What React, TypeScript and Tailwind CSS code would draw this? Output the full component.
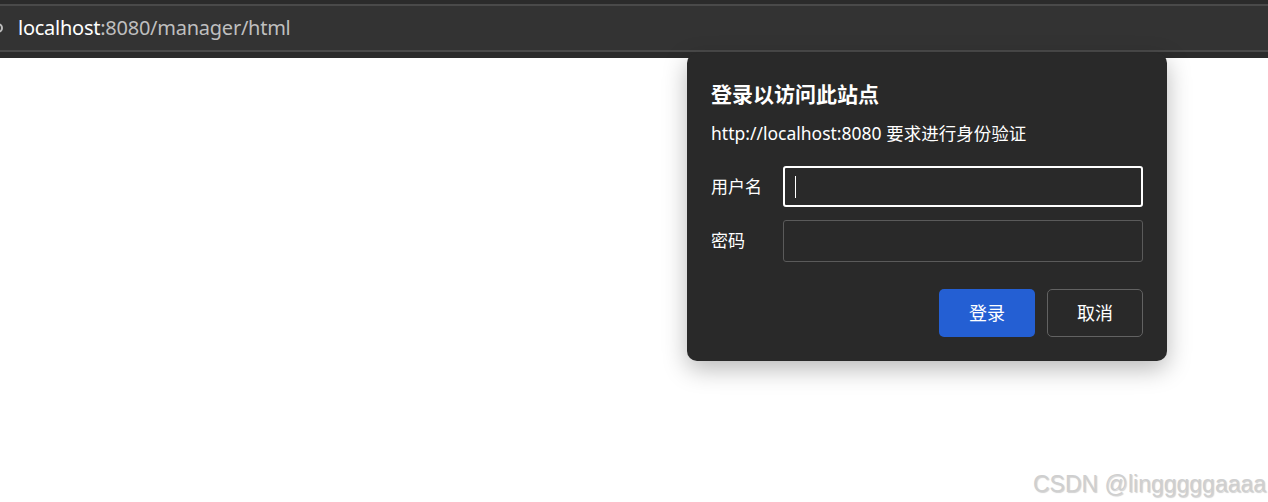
import React from 'react';

const uiFont = { fontFamily: '"Noto Sans", "Noto Sans CJK SC", sans-serif' };

function AddressBar() {
  return (
    <div className="bg-[#2b2b2b] pt-[4px] pb-[6px]">
      <div className="relative flex h-[48px] items-center overflow-hidden border-y-2 border-[#4a4a4a] bg-[#333333] pl-[18px]">
        <span className="absolute left-[-7px] top-[17px] h-[10px] w-[10px] rounded-full border-2 border-[#bdbdbd]" />
        <span className="text-[20px] tracking-[-0.25px] text-[#bfbfbf]" style={uiFont}>
          <span className="text-white">localhost</span>:8080/manager/html
        </span>
      </div>
    </div>
  );
}

function AuthDialog() {
  return (
    <div
      className="absolute left-[687px] top-[53px] w-[480px] rounded-[10px] bg-[#292929] px-6 pt-[26px] pb-[24px] text-white shadow-[0_8px_24px_rgba(0,0,0,0.28)]"
      style={uiFont}
    >
      <h2 className="text-[21px] font-bold leading-[30px]">登录以访问此站点</h2>
      <p className="mt-[12px] text-[17.5px] leading-[24px]">http://localhost:8080 要求进行身份验证</p>

      <div className="mt-[21px] flex items-center">
        <label className="w-[72px] text-[17px]">用户名</label>
        <div className="flex h-[41px] flex-1 items-center rounded-[3px] border-2 border-white bg-[#292929] pl-[10px]">
          <span className="h-[22px] w-px bg-white" />
        </div>
      </div>

      <div className="mt-[13px] flex items-center">
        <label className="w-[72px] text-[17px]">密码</label>
        <div className="h-[42px] flex-1 rounded-[3px] border border-[#5a5a5a] bg-[#292929]" />
      </div>

      <div className="mt-[27px] flex justify-end gap-3">
        <button className="h-[48px] w-[96px] rounded-[5px] bg-[#245fd3] text-[18px] text-white">登录</button>
        <button className="h-[48px] w-[96px] rounded-[5px] border border-[#626262] text-[18px] text-white">取消</button>
      </div>
    </div>
  );
}

export default function App() {
  return (
    <div className="relative h-[502px] w-[1268px] overflow-hidden bg-white">
      <AddressBar />
      <AuthDialog />
      <span
        className="absolute left-[1033px] top-[467px] text-[23px] text-[#cfcfcf] [text-shadow:1px_1px_1px_rgba(0,0,0,0.18)]"
        style={{ fontFamily: '"Liberation Sans", Arial, sans-serif' }}
      >
        CSDN @lingggggaaaa
      </span>
    </div>
  );
}
